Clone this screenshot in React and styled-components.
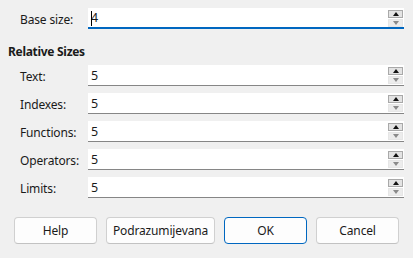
import React from "react";
import styled, { createGlobalStyle } from "styled-components";

const Global = createGlobalStyle`
  html, body { margin: 0; padding: 0; background: #f0f0f0; }
  body { font-family: "Noto Sans", "Open Sans", sans-serif; font-size: 12px; color: #1a1a1a; letter-spacing: -0.15px; }
`;

const Dialog = styled.div`
  width: 413px;
  height: 258px;
  box-sizing: border-box;
  padding: 8px 9px 0 8px;
  display: flex;
  flex-direction: column;
`;

const Row = styled.div`
  display: flex;
  align-items: center;
  height: 21px;
  margin-top: ${(p) => p.$gap || 0}px;
  padding-left: 12px;
`;

const Label = styled.div`
  width: 68px;
  flex: none;
  line-height: 16px;
  padding-top: 2px;
`;

const Field = styled.div`
  flex: 1;
  height: 21px;
  box-sizing: border-box;
  background: #ffffff;
  border-bottom: ${(p) => (p.$focused ? "2px solid #0067c0" : "1px solid #868686")};
  display: flex;
  align-items: stretch;
`;

const Value = styled.div`
  flex: 1;
  padding-left: 3px;
  display: flex;
  align-items: center;
  font-size: 12.5px;
  position: relative;
`;

const Caret = styled.span`
  position: absolute;
  left: 3px;
  top: 3px;
  width: 1px;
  height: 15px;
  background: #000;
`;

const Spin = styled.div`
  width: 15px;
  margin: ${(p) => (p.$focused ? "2px 1px 0 0" : "2px 1px 1px 0")};
  display: flex;
  flex-direction: column;
  gap: 1px;
`;

const SpinBtn = styled.div`
  flex: 1;
  box-sizing: border-box;
  background: ${(p) => (p.$up ? "#e3e3e3" : "#ececec")};
  border: 1px solid ${(p) => (p.$up ? "#a9a9a9" : "#e6e6e6")};
  display: flex;
  align-items: center;
  justify-content: center;
`;

const Tri = styled.span`
  width: 0;
  height: 0;
  border-left: 3.5px solid transparent;
  border-right: 3.5px solid transparent;
  ${(p) =>
    p.$up
      ? "border-bottom: 4px solid #111;"
      : "border-top: 4px solid #8a8a8a;"}
`;

const Heading = styled.div`
  font-weight: 700;
  margin-top: 15px;
  line-height: 16px;
  height: 16px;
  letter-spacing: -0.3px;
`;

const Buttons = styled.div`
  display: flex;
  gap: 9px;
  margin-top: 19px;
  padding-left: 6px;
`;

const Button = styled.button`
  height: 27px;
  min-width: 83px;
  padding: 0 6px;
  box-sizing: border-box;
  background: #fdfdfd;
  border: 1px solid ${(p) => (p.$primary ? "#0067c0" : "#d0d0d0")};
  border-bottom-color: ${(p) => (p.$primary ? "#0067c0" : "#c2c2c2")};
  border-radius: 4px;
  font-family: inherit;
  font-size: 12px;
  letter-spacing: -0.15px;
  color: #1a1a1a;
`;

function SpinField({ value, focused }) {
  return (
    <Field $focused={focused}>
      <Value>
        {focused && <Caret />}
        {value}
      </Value>
      <Spin $focused={focused}>
        <SpinBtn $up>
          <Tri $up />
        </SpinBtn>
        <SpinBtn>
          <Tri />
        </SpinBtn>
      </Spin>
    </Field>
  );
}

const rows = ["Text:", "Indexes:", "Functions:", "Operators:", "Limits:"];

export default function App() {
  return (
    <>
      <Global />
      <Dialog>
        <Row>
          <Label>Base size:</Label>
          <SpinField value="4" focused />
        </Row>
        <Heading>Relative Sizes</Heading>
        {rows.map((r, i) => (
          <Row key={r} $gap={i === 0 ? 5 : 7}>
            <Label>{r}</Label>
            <SpinField value="5" />
          </Row>
        ))}
        <Buttons>
          <Button>Help</Button>
          <Button>Podrazumijevana</Button>
          <Button $primary>OK</Button>
          <Button>Cancel</Button>
        </Buttons>
      </Dialog>
    </>
  );
}
